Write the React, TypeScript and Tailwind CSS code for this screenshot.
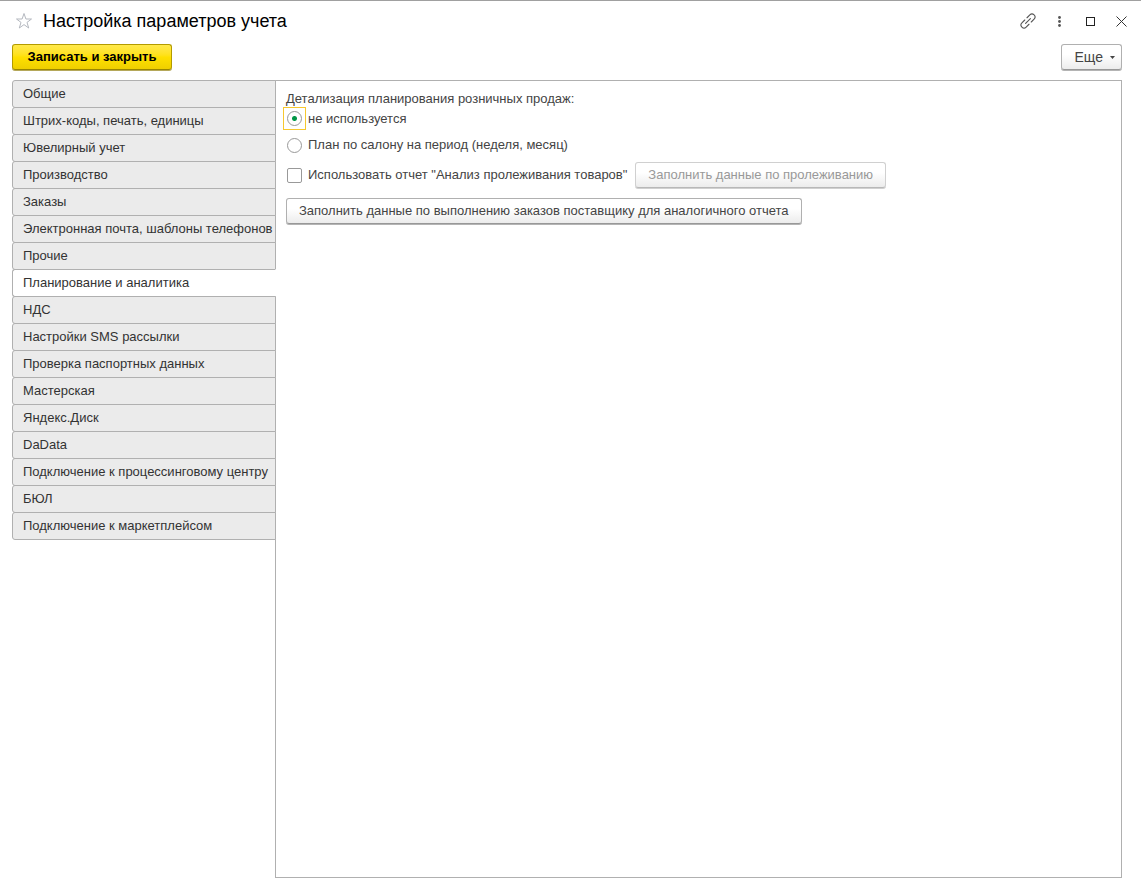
import { useState } from 'react';

const tabs = [
  'Общие',
  'Штрих-коды, печать, единицы',
  'Ювелирный учет',
  'Производство',
  'Заказы',
  'Электронная почта, шаблоны телефонов',
  'Прочие',
  'Планирование и аналитика',
  'НДС',
  'Настройки SMS рассылки',
  'Проверка паспортных данных',
  'Мастерская',
  'Яндекс.Диск',
  'DaData',
  'Подключение к процессинговому центру',
  'БЮЛ',
  'Подключение к маркетплейсом',
];

const plainButton =
  'h-[26px] rounded-[3px] border border-[#b0b0b0] border-b-[#989898] bg-linear-to-b from-white from-40% to-[#ececec] text-[#444] whitespace-nowrap shadow-[0_1px_0_#b4b4b4] disabled:border-[#d0d0d0] disabled:border-b-[#b8b8b8] disabled:text-[#999] disabled:shadow-[0_1px_0_#d0d0d0]';

const radioClass =
  'w-[15px] h-[15px] shrink-0 appearance-none rounded-full border border-[#999] bg-white outline-none checked:bg-[radial-gradient(circle,#009646_2px,transparent_3px)]';

function StarIcon() {
  return (
    <svg width="18" height="18" viewBox="0 0 18 18" fill="none" stroke="#b4b8bf" strokeWidth="1">
      <path d="M9 1.5 10.9 7h5.6l-4.5 3.4 1.7 5.6L9 12.6 4.3 16 6 10.4 1.5 7h5.6z" />
    </svg>
  );
}

function LinkIcon() {
  return (
    <svg width="16" height="16" viewBox="-8 -8 16 16" fill="none" stroke="#555" strokeWidth="1.1" strokeLinecap="round">
      <g transform="rotate(-45)">
        <path d="M-1.6 3h-4a3 3 0 0 1 0-6h4" />
        <path d="M1.6-3h4a3 3 0 0 1 0 6h-4" />
        <path d="M-3.4 0h6.8" />
      </g>
    </svg>
  );
}

function DotsIcon() {
  return (
    <svg width="3" height="11" viewBox="0 0 3 11" fill="#555">
      <circle cx="1.5" cy="1.5" r="1.4" />
      <circle cx="1.5" cy="5.5" r="1.4" />
      <circle cx="1.5" cy="9.5" r="1.4" />
    </svg>
  );
}

function MaximizeIcon() {
  return (
    <svg width="9" height="9" viewBox="0 0 9 9" fill="none" stroke="#222" strokeWidth="1">
      <rect x="0.5" y="0.5" width="8" height="8" />
    </svg>
  );
}

function CloseIcon() {
  return (
    <svg width="11" height="11" viewBox="0 0 11 11" stroke="#333" strokeWidth="1">
      <path d="m.5.5 10 10M10.5.5l-10 10" />
    </svg>
  );
}

export default function App() {
  const [active, setActive] = useState('Планирование и аналитика');
  const [plan, setPlan] = useState('none');

  return (
    <div className="flex min-h-screen flex-col border-t border-[#a0a0a0] bg-white pb-3 font-['Liberation_Sans',Arial,sans-serif] text-[13px] leading-4 text-[#444]">
      <header className="mb-[3px] flex h-10 items-center pr-[14px] pl-[15px]">
        <button type="button" aria-label="Добавить в избранное">
          <StarIcon />
        </button>
        <h1 className="ml-[10px] text-lg text-black">Настройка параметров учета</h1>
        <div className="ml-auto flex items-center">
          <button type="button" aria-label="Получить ссылку">
            <LinkIcon />
          </button>
          <button type="button" aria-label="Меню" className="ml-[22px]">
            <DotsIcon />
          </button>
          <button type="button" aria-label="Развернуть" className="ml-[25px]">
            <MaximizeIcon />
          </button>
          <button type="button" aria-label="Закрыть" className="ml-[21px]">
            <CloseIcon />
          </button>
        </div>
      </header>

      <div className="flex items-center justify-between pr-[19px] pl-3">
        <button
          type="button"
          className="h-[26px] min-w-40 rounded-[3px] border border-[#b39b00] border-b-[#9a8600] bg-linear-to-b from-[#ffe94a] via-[#ffe000] to-[#efcf00] px-3 font-bold text-black shadow-[0_1px_0_#b5a85a]"
        >
          Записать и закрыть
        </button>
        <button type="button" className={`${plainButton} flex items-center gap-[7px] pr-[6px] pl-[13px] text-sm`}>
          Еще
          <svg width="5" height="3" viewBox="0 0 5 3" fill="#444">
            <path d="M0 0h5L2.5 3z" />
          </svg>
        </button>
      </div>

      <div className="mt-[10px] flex grow pr-[19px] pl-3">
        <nav className="z-10 -mr-px flex w-[264px] shrink-0 flex-col">
          {tabs.map((tab) => (
            <button
              key={tab}
              type="button"
              onClick={() => setActive(tab)}
              className={`-mb-px h-7 rounded-l-[3px] border border-[#b0b0b0] px-[10px] text-left whitespace-nowrap text-[#333] ${
                tab === active ? 'border-r-white bg-white' : 'bg-[#ebebeb]'
              }`}
            >
              {tab}
            </button>
          ))}
        </nav>

        <main className="min-w-0 grow border border-[#b0b0b0] px-[10px] pt-[10px]">
          <fieldset>
            <legend>Детализация планирования розничных продаж:</legend>
            <label className="flex h-[23px] w-fit items-center gap-[2px]">
              <span className="-ml-[3px] flex h-[23px] w-[23px] items-center justify-center border border-[#f7c82f]">
                <input
                  type="radio"
                  name="plan"
                  checked={plan === 'none'}
                  onChange={() => setPlan('none')}
                  className={radioClass}
                />
              </span>
              не используется
            </label>
            <label className="mt-[7px] flex w-fit items-center gap-[6px] pl-px">
              <input
                type="radio"
                name="plan"
                checked={plan === 'salon'}
                onChange={() => setPlan('salon')}
                className={radioClass}
              />
              План по салону на период (неделя, месяц)
            </label>
          </fieldset>

          <div className="mt-[9px] flex items-center gap-2">
            <label className="flex items-center gap-[6px] pl-px whitespace-nowrap">
              <input
                type="checkbox"
                className="h-[15px] w-[15px] shrink-0 appearance-none rounded-[2px] border border-[#999] bg-white checked:bg-[#009646]"
              />
              Использовать отчет "Анализ пролеживания товаров"
            </label>
            <button type="button" disabled className={`${plainButton} px-3`}>
              Заполнить данные по пролеживанию
            </button>
          </div>
          <button type="button" className={`${plainButton} mt-[10px] px-3`}>
            Заполнить данные по выполнению заказов поставщику для аналогичного отчета
          </button>
        </main>
      </div>
    </div>
  );
}
